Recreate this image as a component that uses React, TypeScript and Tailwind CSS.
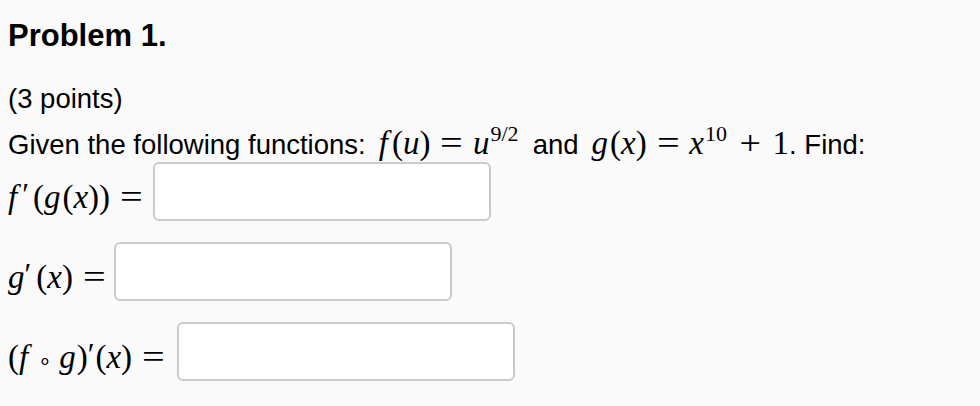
import type { ReactNode } from 'react';

// ── Math helpers ──────────────────────────────────────────────────────────────

const SERIF = "font-['Liberation_Serif',serif]";
const SANS = "font-['Liberation_Sans',Arial,sans-serif]";

function V({ children, r = 0 }: { children: ReactNode; r?: number }) {
  return (
    <span className="italic" style={r ? { marginRight: r } : undefined}>
      {children}
    </span>
  );
}

function Eq() {
  return <span className="mx-[12px] inline-block scale-x-[1.22]">=</span>;
}

function Prime({ l = 2, r = 2 }: { l?: number; r?: number }) {
  return (
    <span className="relative -top-[3px] inline-block text-[31px]" style={{ marginLeft: l, marginRight: r }}>
      ′
    </span>
  );
}

function Sup({ children }: { children: ReactNode }) {
  return <span className="relative -top-[13px] ml-[1px] text-[22px] not-italic">{children}</span>;
}

function Math({ children, className = '' }: { children: ReactNode; className?: string }) {
  return <span className={`${SERIF} text-[33px] whitespace-nowrap ${className}`}>{children}</span>;
}

// ── Answer row ────────────────────────────────────────────────────────────────

function AnswerRow({ label, labelWidth }: { label: ReactNode; labelWidth: string }) {
  return (
    <div className="flex items-center">
      <div className={`${labelWidth} shrink-0 pt-[17px] leading-[36px]`}>{label}</div>
      <input
        type="text"
        className="h-[59px] w-[338px] rounded-[6px] border-2 border-[#cbcbcb] bg-white outline-none"
      />
    </div>
  );
}

export default function App() {
  return (
    <div className={`min-h-screen bg-[#fafafa] pl-[8px] pt-[18px] text-black ${SANS}`}>
      <h1 className="text-[31px] leading-[36px] font-bold">Problem 1.</h1>

      <p className="mt-[29px] text-[27.5px] leading-[32px]">(3 points)</p>

      <div className="mt-[12px] flex h-[32px] items-baseline text-[27.5px] leading-[32px] whitespace-nowrap">
        <span>Given the following functions:</span>
        <Math className="ml-[13px]">
          <V r={4}>f</V>(<V>u</V>)<Eq />
          <V>u</V>
          <Sup>9/2</Sup>
        </Math>
        <span className="ml-[14px]">and</span>
        <Math className="ml-[13px]">
          <V r={2}>g</V>(<V>x</V>)<Eq />
          <V>x</V>
          <Sup>10</Sup>
          <span className="ml-[14px] inline-block scale-x-[1.15]">+</span>
          <span className="ml-[13px]">1</span>
        </Math>
        <span>. Find:</span>
      </div>

      <div className="mt-[3px] flex flex-col gap-[21px]">
        <AnswerRow
          labelWidth="w-[145px]"
          label={
            <Math>
              <V>f</V>
              <Prime l={5} r={4} />(<V r={2}>g</V>(<V>x</V>))<Eq />
            </Math>
          }
        />
        <AnswerRow
          labelWidth="w-[106px]"
          label={
            <Math>
              <V>g</V>
              <Prime l={0} r={5} />(<V>x</V>)<Eq />
            </Math>
          }
        />
        <AnswerRow
          labelWidth="w-[169px]"
          label={
            <Math>
              (<V r={3}>f</V>
              <span className="mx-[7px] text-[22px]">∘</span>
              <V r={1}>g</V>)
              <Prime l={0} r={1} />(<V>x</V>)<Eq />
            </Math>
          }
        />
      </div>
    </div>
  );
}
